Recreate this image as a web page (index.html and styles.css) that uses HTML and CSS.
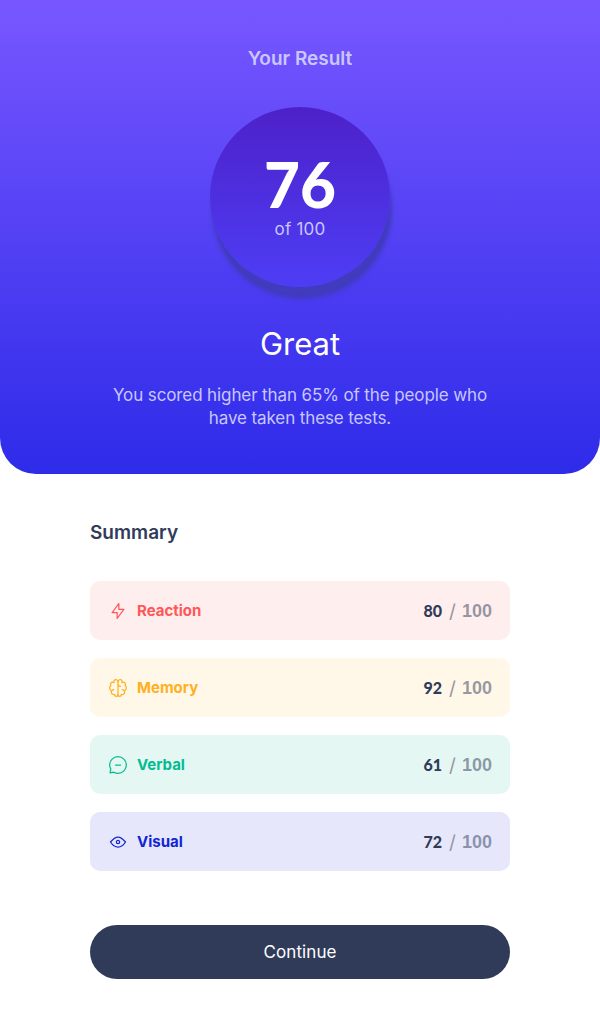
FILE: index.html
```
<!DOCTYPE html>
<html lang="en">
<head>
<meta charset="utf-8">
<title>Results summary</title>
<link rel="stylesheet" href="styles.css">
</head>
<body>
<main class="page">
  <section class="result">
    <h1 class="result-title">Your Result</h1>
    <div class="score">
      <span class="score-value">76</span>
      <span class="score-total">of 100</span>
    </div>
    <h2 class="grade">Great</h2>
    <p class="result-text">You scored higher than 65% of the people who<br>have taken these tests.</p>
  </section>
  <section class="summary">
    <h2 class="summary-title">Summary</h2>
    <ul class="list">
      <li class="item reaction">
        <svg class="icon" viewBox="0 0 20 20"><path d="M10.833 8.333V2.5l-6.666 9.167h5V17.5l6.666-9.167h-5Z"/></svg>
        <span class="name">Reaction</span>
        <span class="value">80</span><span class="slash">/</span><span class="max">100</span>
      </li>
      <li class="item memory">
        <svg class="icon" viewBox="0 0 20 20"><path d="M5.833 11.667a2.5 2.5 0 1 0 .834 4.858"/><path d="M3.553 13.004a3.333 3.333 0 0 1-.728-5.53m.025-.067a2.083 2.083 0 0 1 2.983-2.824m.199.054A2.083 2.083 0 1 1 10 3.75v12.917a1.667 1.667 0 0 1-3.333 0M10 5.833a2.5 2.5 0 0 0 2.5 2.5m1.667 3.334a2.5 2.5 0 1 1-.834 4.858"/><path d="M16.447 13.004a3.334 3.334 0 0 0 .728-5.53m-.025-.067a2.083 2.083 0 0 0-2.983-2.824M10 3.75a2.085 2.085 0 0 1 2.538-2.033 2.084 2.084 0 0 1 1.43 2.92m-.635 12.03a1.667 1.667 0 0 1-3.333 0"/></svg>
        <span class="name">Memory</span>
        <span class="value">92</span><span class="slash">/</span><span class="max">100</span>
      </li>
      <li class="item verbal">
        <svg class="icon" viewBox="0 0 20 20"><path d="M7.5 10h5"/><path d="M10 18.333A8.333 8.333 0 1 0 1.667 10c0 1.518.406 2.942 1.115 4.167l-.699 3.75 3.75-.699A8.295 8.295 0 0 0 10 18.333Z"/></svg>
        <span class="name">Verbal</span>
        <span class="value">61</span><span class="slash">/</span><span class="max">100</span>
      </li>
      <li class="item visual">
        <svg class="icon" viewBox="0 0 20 20"><path d="M10 11.667a1.667 1.667 0 1 0 0-3.334 1.667 1.667 0 0 0 0 3.334Z"/><path d="M17.5 10c-1.574 2.492-4.402 5-7.5 5s-5.926-2.508-7.5-5C4.416 7.632 6.66 5 10 5s5.584 2.632 7.5 5Z"/></svg>
        <span class="name">Visual</span>
        <span class="value">72</span><span class="slash">/</span><span class="max">100</span>
      </li>
    </ul>
    <button class="continue" type="button">Continue</button>
  </section>
</main>
</body>
</html>
```
FILE: styles.css
```
* { box-sizing: border-box; margin: 0; padding: 0; }
body { font-family: Inter, "Liberation Sans", sans-serif; font-size: 18px; background: #fff; color: #303b59; }
.page { height: 1024px; overflow: hidden; }
.result { height: 474px; padding-top: 47px; display: flex; flex-direction: column; align-items: center; text-align: center; background: linear-gradient(#7857ff, #2e2be9); border-radius: 0 0 36px 36px; color: #c8c7ff; }
.result-title { height: 24px; font-size: 19px; line-height: 24px; font-weight: 600; letter-spacing: 0; }
.score { width: 180px; height: 180px; margin-top: 36px; padding-top: 46px; border-radius: 50%; background: linear-gradient(#4d21c9, #4e3df5); box-shadow: 2px 12px 4px #413bbd; display: flex; flex-direction: column; align-items: center; }
.score-value { height: 62px; color: #fff; font-family: Lato, sans-serif; font-size: 62px; line-height: 62px; font-weight: 900; }
.score-total { font-size: 17px; line-height: 22px; margin-top: 3px; letter-spacing: 0.2px; }
.grade { margin-top: 37px; color: #fff; font-size: 31px; line-height: 40px; font-weight: 400; }
.result-text { margin-top: 20px; font-size: 17px; line-height: 23px; letter-spacing: -0.11px; white-space: nowrap; }
.summary { width: 420px; margin: 47px auto 0; }
.summary-title { font-size: 19px; line-height: 24px; font-weight: 600; }
.list { margin-top: 36px; list-style: none; display: flex; flex-direction: column; gap: 18px; }
.item { height: 59px; padding: 0 18px; display: flex; align-items: center; border-radius: 10px; }
.icon { width: 20px; height: 20px; fill: none; stroke: currentColor; stroke-width: 1.25; stroke-linecap: round; stroke-linejoin: round; }
.name { margin: 0 auto 0 9px; font-size: 15px; line-height: 20px; font-weight: 700; }
.value { color: #303b59; font-size: 16px; font-weight: 900; font-family: Lato, sans-serif; }
.slash { margin: 2px 6px 0 7px; color: #95959f; font-size: 19px; }
.max { padding-top: 2px; color: #303b5980; font-family: "Liberation Sans", sans-serif; font-size: 18px; font-weight: 700; }
.reaction { background: #ffeeee; color: #ff5757; }
.memory { background: #fff7e8; color: #ffb01f; }
.verbal { background: #e5f7f2; color: #00bd91; }
.visual { background: #e6e7fb; color: #1125d4; }
.continue { display: block; width: 420px; height: 54px; margin-top: 54px; border: 0; border-radius: 27px; background: #303b59; color: #fff; font: 400 17px/24px Inter, sans-serif; letter-spacing: 0.1px; }
```
